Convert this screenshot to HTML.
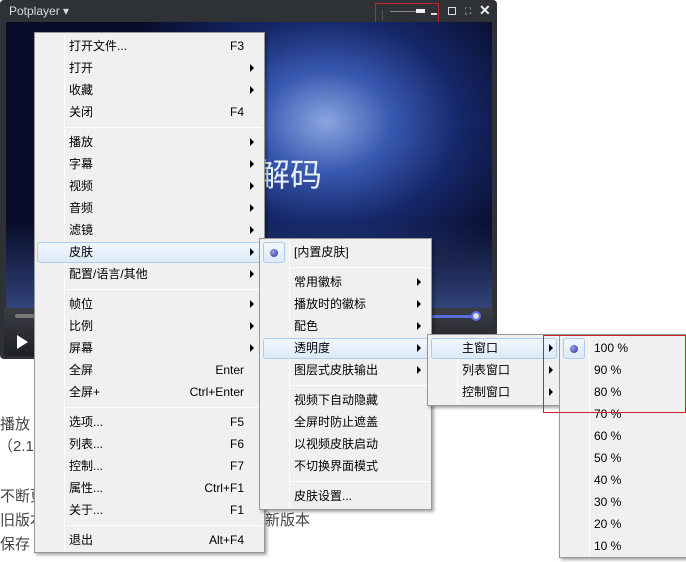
<!DOCTYPE html>
<html><head><meta charset="utf-8"><style>
*{margin:0;padding:0;box-sizing:border-box}
body{width:686px;height:562px;overflow:hidden;background:#fff;position:relative;font-family:"Liberation Sans","Noto Sans CJK SC","WenQuanYi Zen Hei",sans-serif;font-size:12px;color:#000}
.abs{position:absolute}
.player{left:0;top:0;width:497px;height:359px;background:#2e3136;border-radius:4px;}
.title{left:9px;top:4px;color:#d8dbe0;font-size:12px}
.video{left:6px;top:22px;width:486px;height:286px;background:linear-gradient(180deg,rgba(0,0,0,0) 70%,rgba(90,120,200,.5) 100%),radial-gradient(ellipse 220px 170px at 320px 100px,#8aa6e0 0%,#3858b0 30%,#16286a 60%,#080d2a 100%);overflow:hidden}
.ctrl{left:4px;top:308px;width:489px;height:48px;background:linear-gradient(#3a3d44,#1e2024);border-radius:0 0 4px 4px}
.menu{background:#f0f0f0;border:1px solid #979797;box-shadow:2px 2px 3px rgba(0,0,0,.35)}
.it{position:absolute;height:22px;line-height:22px;font-size:12px}
.sc{position:absolute;text-align:right;height:22px;line-height:22px}
.arr{position:absolute;width:0;height:0;border-top:4px solid transparent;border-bottom:4px solid transparent;border-left:4px solid #000}
.sep{position:absolute;height:1px;background:#dcdcdc;border-bottom:1px solid #fff}
.hl{position:absolute;height:21px;border:1px solid #aeccef;border-radius:3px;background:linear-gradient(#f3f7fd,#dde9f8)}
.gut{position:absolute;top:2px;bottom:2px;width:1px;background:#e2e2e2;border-right:1px solid #fff}
.dot{position:absolute;width:8px;height:8px;border-radius:50%;background:radial-gradient(circle at 35% 35%,#9aa0ee,#2a2f96)}
.bg{position:absolute;font-size:15px;color:#444}
</style></head><body>
<div class="abs player"></div>
<div class="abs title">Potplayer ▾</div>
<div class="abs" style="left:382px;top:10px;width:1px;height:10px;background:#555"></div>
<div class="abs" style="left:390px;top:11px;width:26px;height:1px;background:#888"></div>
<div class="abs" style="left:416px;top:9px;width:9px;height:4px;background:#eee"></div>
<div class="abs" style="left:431px;top:13px;width:6px;height:2px;background:#ddd"></div>
<div class="abs" style="left:448px;top:7px;width:8px;height:8px;border:1.5px solid #ddd"></div>
<div class="abs" style="left:465px;top:6px;color:#ddd;font-size:9px">⛶</div>
<div class="abs" style="left:479px;top:2px;color:#eee;font-size:14px;font-weight:bold">✕</div>
<div class="abs" style="left:375px;top:3px;width:64px;height:25px;border:1px solid #c8252b"></div>
<div class="abs video"><div class="abs" style="left:252px;top:128px;color:#e8eef8;font-size:32px">解码</div></div>
<div class="abs ctrl"></div>
<div class="abs" style="left:15px;top:314px;width:20px;height:4px;background:#777;border-radius:2px"></div>
<div class="abs" style="left:432px;top:315px;width:42px;height:3px;background:#5a6ee0"></div>
<div class="abs" style="left:471px;top:311px;width:10px;height:10px;border-radius:50%;background:#dde;border:2px solid #5a6ee0"></div>
<div class="abs" style="left:17px;top:335px;width:0;height:0;border-top:7px solid transparent;border-bottom:7px solid transparent;border-left:11px solid #fff"></div>

<div class="bg" style="left:0;top:413px">播放</div>
<div class="bg" style="left:-2px;top:435px">（2.1</div>
<div class="bg" style="left:0;top:485px">不断更</div>
<div class="bg" style="left:0;top:509px">旧版本</div>
<div class="bg" style="left:265px;top:509px">新版本</div>
<div class="bg" style="left:0;top:533px">保存</div>

<div class="abs menu" style="left:34px;top:32px;width:231px;height:521px">
<div class="gut" style="left:29px"></div>
<div class="hl" style="left:2px;top:209px;width:226px"></div>
<div class="sep" style="left:31px;top:94px;width:196px"></div>
<div class="sep" style="left:31px;top:256px;width:196px"></div>
<div class="sep" style="left:31px;top:374px;width:196px"></div>
<div class="sep" style="left:31px;top:492px;width:196px"></div>
<div class="it" style="left:34px;top:2px">打开文件...</div><div class="sc" style="right:20px;top:2px">F3</div>
<div class="it" style="left:34px;top:24px">打开</div><div class="arr" style="left:215px;top:31px"></div>
<div class="it" style="left:34px;top:46px">收藏</div><div class="arr" style="left:215px;top:53px"></div>
<div class="it" style="left:34px;top:68px">关闭</div><div class="sc" style="right:20px;top:68px">F4</div>
<div class="it" style="left:34px;top:98px">播放</div><div class="arr" style="left:215px;top:105px"></div>
<div class="it" style="left:34px;top:120px">字幕</div><div class="arr" style="left:215px;top:127px"></div>
<div class="it" style="left:34px;top:142px">视频</div><div class="arr" style="left:215px;top:149px"></div>
<div class="it" style="left:34px;top:164px">音频</div><div class="arr" style="left:215px;top:171px"></div>
<div class="it" style="left:34px;top:186px">滤镜</div><div class="arr" style="left:215px;top:193px"></div>
<div class="it" style="left:34px;top:208px">皮肤</div><div class="arr" style="left:215px;top:215px"></div>
<div class="it" style="left:34px;top:230px">配置/语言/其他</div><div class="arr" style="left:215px;top:237px"></div>
<div class="it" style="left:34px;top:260px">帧位</div><div class="arr" style="left:215px;top:267px"></div>
<div class="it" style="left:34px;top:282px">比例</div><div class="arr" style="left:215px;top:289px"></div>
<div class="it" style="left:34px;top:304px">屏幕</div><div class="arr" style="left:215px;top:311px"></div>
<div class="it" style="left:34px;top:326px">全屏</div><div class="sc" style="right:20px;top:326px">Enter</div>
<div class="it" style="left:34px;top:348px">全屏+</div><div class="sc" style="right:20px;top:348px">Ctrl+Enter</div>
<div class="it" style="left:34px;top:378px">选项...</div><div class="sc" style="right:20px;top:378px">F5</div>
<div class="it" style="left:34px;top:400px">列表...</div><div class="sc" style="right:20px;top:400px">F6</div>
<div class="it" style="left:34px;top:422px">控制...</div><div class="sc" style="right:20px;top:422px">F7</div>
<div class="it" style="left:34px;top:444px">属性...</div><div class="sc" style="right:20px;top:444px">Ctrl+F1</div>
<div class="it" style="left:34px;top:466px">关于...</div><div class="sc" style="right:20px;top:466px">F1</div>
<div class="it" style="left:34px;top:496px">退出</div><div class="sc" style="right:20px;top:496px">Alt+F4</div>
</div>

<div class="abs menu" style="left:259px;top:238px;width:173px;height:272px">
<div class="gut" style="left:29px"></div>
<div class="hl" style="left:3px;top:3px;width:22px"></div>
<div class="dot" style="left:10px;top:10px"></div>
<div class="hl" style="left:3px;top:99px;width:166px"></div>
<div class="sep" style="left:31px;top:28px;width:138px"></div>
<div class="sep" style="left:31px;top:146px;width:138px"></div>
<div class="sep" style="left:31px;top:242px;width:138px"></div>
<div class="it" style="left:34px;top:2px">[内置皮肤]</div>
<div class="it" style="left:34px;top:32px">常用徽标</div><div class="arr" style="left:157px;top:39px"></div>
<div class="it" style="left:34px;top:54px">播放时的徽标</div><div class="arr" style="left:157px;top:61px"></div>
<div class="it" style="left:34px;top:76px">配色</div><div class="arr" style="left:157px;top:83px"></div>
<div class="it" style="left:34px;top:98px">透明度</div><div class="arr" style="left:157px;top:105px"></div>
<div class="it" style="left:34px;top:120px">图层式皮肤输出</div><div class="arr" style="left:157px;top:127px"></div>
<div class="it" style="left:34px;top:150px">视频下自动隐藏</div>
<div class="it" style="left:34px;top:172px">全屏时防止遮盖</div>
<div class="it" style="left:34px;top:194px">以视频皮肤启动</div>
<div class="it" style="left:34px;top:216px">不切换界面模式</div>
<div class="it" style="left:34px;top:246px">皮肤设置...</div>
</div>

<div class="abs menu" style="left:427px;top:334px;width:133px;height:72px">
<div class="gut" style="left:29px"></div>
<div class="hl" style="left:3px;top:3px;width:126px"></div>
<div class="it" style="left:34px;top:2px">主窗口</div><div class="arr" style="left:121px;top:9px"></div>
<div class="it" style="left:34px;top:24px">列表窗口</div><div class="arr" style="left:121px;top:31px"></div>
<div class="it" style="left:34px;top:46px">控制窗口</div><div class="arr" style="left:121px;top:53px"></div>
</div>

<div class="abs menu" style="left:559px;top:334px;width:128px;height:224px">
<div class="gut" style="left:29px"></div>
<div class="hl" style="left:3px;top:3px;width:22px"></div>
<div class="dot" style="left:10px;top:10px"></div>
<div class="it" style="left:34px;top:2px">100 %</div>
<div class="it" style="left:34px;top:24px">90 %</div>
<div class="it" style="left:34px;top:46px">80 %</div>
<div class="it" style="left:34px;top:68px">70 %</div>
<div class="it" style="left:34px;top:90px">60 %</div>
<div class="it" style="left:34px;top:112px">50 %</div>
<div class="it" style="left:34px;top:134px">40 %</div>
<div class="it" style="left:34px;top:156px">30 %</div>
<div class="it" style="left:34px;top:178px">20 %</div>
<div class="it" style="left:34px;top:200px">10 %</div>
</div>
<div class="abs" style="left:543px;top:335px;width:143px;height:78px;border:1px solid #c8252b"></div>
</body></html>
